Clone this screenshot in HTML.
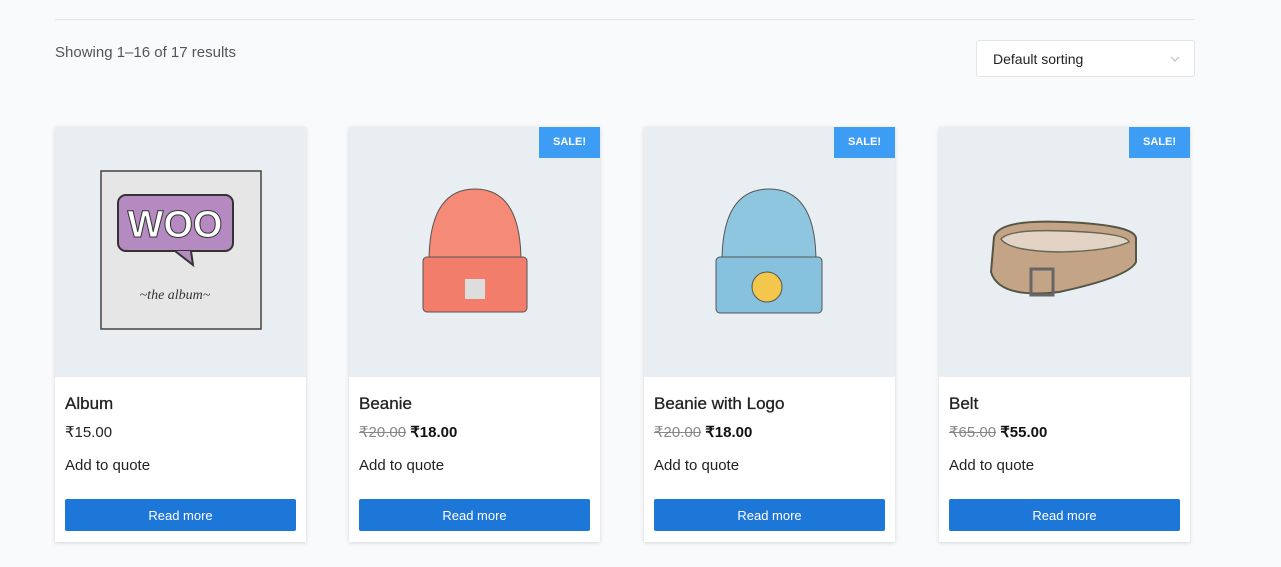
<!DOCTYPE html>
<html><head><style>
body{margin:0;background:#f9fafc;font-family:"Liberation Sans",sans-serif;width:1281px;height:567px;overflow:hidden;position:relative}
.hr{position:absolute;left:55px;top:19px;width:1140px;height:1px;background:#e3e5ea}
.count{position:absolute;left:55px;top:44px;font-size:15px;color:#555}
.sort{position:absolute;left:976px;top:40px;width:219px;height:37px;border:1px solid #e2e4e8;border-radius:3px;background:#fff;box-sizing:border-box}
.sort span{position:absolute;left:16px;top:10px;font-size:14px;color:#222}
.sort svg{position:absolute;right:14px;top:15px}
.card{position:absolute;top:127px;width:251px;height:415px;background:#fff;box-shadow:0 1px 4px rgba(0,0,0,.15)}
.img{height:250px;background:#e9eef2;position:relative}
.sale{position:absolute;right:0;top:0;width:61px;height:31px;background:#3d9df5;color:#fff;font-weight:bold;font-size:11px;text-align:center;line-height:31px}
.t{position:absolute;left:10px;top:267px;font-size:17px;color:#222;-webkit-text-stroke:0.3px #222}
.p{position:absolute;left:10px;top:296px;font-size:15px;color:#222}
.p s{color:#888}
.p b{color:#111}
.q{position:absolute;left:10px;top:330px;font-size:15px;color:#222}
.btn{position:absolute;left:10px;top:372px;width:231px;height:32px;background:#1c77d9;border-radius:2px;color:#fff;font-size:13px;text-align:center;line-height:33px}
</style></head><body>
<div class="hr"></div>
<div class="count">Showing 1–16 of 17 results</div>
<div class="sort"><span>Default sorting</span><svg width="10" height="6"><path d="M1 1l4 4 4-4" stroke="#bbb" fill="none"/></svg></div>

<div class="card" style="left:55px"><div class="img"><svg width="251" height="250">
<rect x="46" y="44" width="160" height="158" fill="#e6e6e6" stroke="#444" stroke-width="1.5"/>
<rect x="63" y="68" width="115" height="56" rx="8" fill="#b48ac0" stroke="#333" stroke-width="2"/>
<path d="M120 124l18 14-2-14" fill="#b48ac0" stroke="#333" stroke-width="2"/>
<text x="120" y="110" font-size="38" font-weight="bold" fill="#fff" stroke="#333" text-anchor="middle" font-family="Liberation Sans">WOO</text>
<text x="120" y="172" font-size="14" font-style="italic" fill="#333" text-anchor="middle" font-family="Liberation Serif">~the   album~</text>
</svg></div><div class="t">Album</div><div class="p">₹15.00</div><div class="q">Add to quote</div><div class="btn">Read more</div></div>

<div class="card" style="left:349px"><div class="img"><svg width="251" height="250">
<path d="M80 135 Q80 62 126 62 Q172 62 172 135Z" fill="#f58a76" stroke="#555"/>
<rect x="74" y="130" width="104" height="55" rx="4" fill="#f37d6b" stroke="#555"/>
<rect x="116" y="152" width="20" height="20" fill="#ddd"/>
</svg><div class="sale">SALE!</div></div><div class="t">Beanie</div><div class="p"><s>₹20.00</s> <b>₹18.00</b></div><div class="q">Add to quote</div><div class="btn">Read more</div></div>

<div class="card" style="left:644px"><div class="img"><svg width="251" height="250">
<path d="M78 135 Q78 62 125 62 Q172 62 172 135Z" fill="#8ec6df" stroke="#555"/>
<rect x="72" y="130" width="106" height="56" rx="4" fill="#86c1dd" stroke="#555"/>
<circle cx="123" cy="160" r="15" fill="#f3c64c" stroke="#555"/>
</svg><div class="sale">SALE!</div></div><div class="t">Beanie with Logo</div><div class="p"><s>₹20.00</s> <b>₹18.00</b></div><div class="q">Add to quote</div><div class="btn">Read more</div></div>

<div class="card" style="left:939px"><div class="img"><svg width="251" height="250">
<path d="M55 110 Q60 92 125 95 Q198 98 197 112 L197 135 Q190 150 120 165 Q60 172 52 145Z" fill="#c4a487" stroke="#554" stroke-width="2"/>
<path d="M62 112 Q70 102 125 104 Q188 106 190 115 Q170 124 120 125 Q70 124 62 112Z" fill="#e3d3c4" stroke="#665" stroke-width="1.5"/>
<rect x="92" y="142" width="22" height="26" fill="none" stroke="#666" stroke-width="3"/>
</svg><div class="sale">SALE!</div></div><div class="t">Belt</div><div class="p"><s>₹65.00</s> <b>₹55.00</b></div><div class="q">Add to quote</div><div class="btn">Read more</div></div>
</body></html>
